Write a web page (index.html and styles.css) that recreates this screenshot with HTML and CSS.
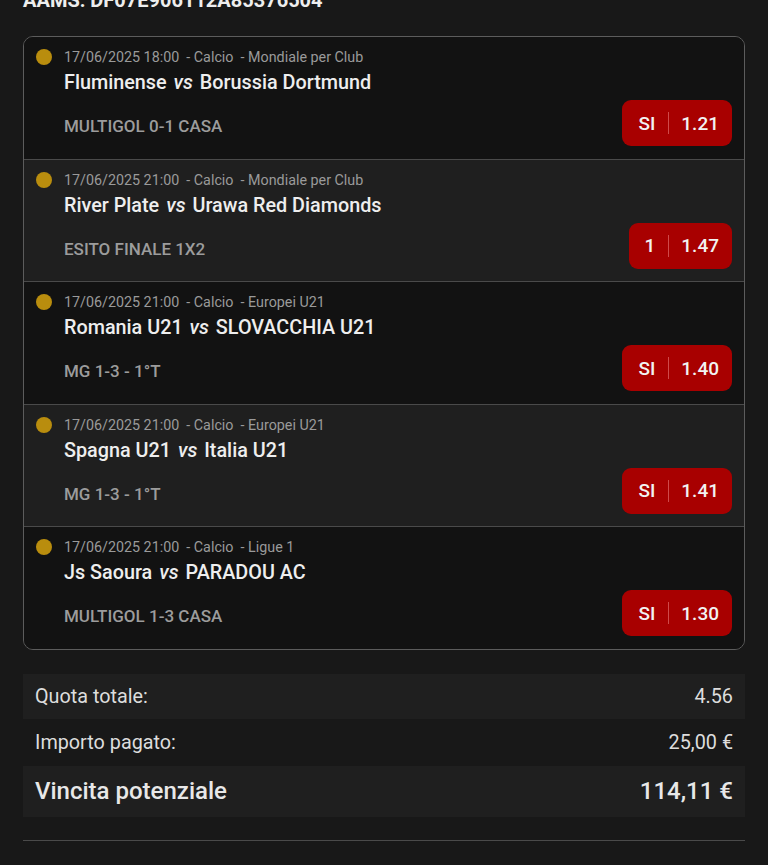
FILE: index.html
```html
<!DOCTYPE html>
<html lang="it">
<head>
    <meta charset="UTF-8">
    <meta name="viewport" content="width=device-width, initial-scale=1.0">
    <title>Scommessa</title>
    <link rel="stylesheet" href="styles.css">
</head>
<body>

    <div class="wrap">
        <div class="codice">AAMS: DF07E906112A85376504</div>

        <!-- Lista eventi -->
        <div class="eventi">
            <div class="evento">
                <span class="dot"></span>
                <div class="corpo">
                    <p class="meta">17/06/2025 18:00 &nbsp;- Calcio &nbsp;- Mondiale per Club</p>
                    <p class="partita">Fluminense <i>vs</i> Borussia Dortmund</p>
                    <div class="riga">
                        <span class="mercato">MULTIGOL 0-1 CASA</span>
                        <span class="quota"><b>SI</b><span class="sep"></span><b>1.21</b></span>
                    </div>
                </div>
            </div>
            <div class="evento">
                <span class="dot"></span>
                <div class="corpo">
                    <p class="meta">17/06/2025 21:00 &nbsp;- Calcio &nbsp;- Mondiale per Club</p>
                    <p class="partita">River Plate <i>vs</i> Urawa Red Diamonds</p>
                    <div class="riga">
                        <span class="mercato">ESITO FINALE 1X2</span>
                        <span class="quota"><b>1</b><span class="sep"></span><b>1.47</b></span>
                    </div>
                </div>
            </div>
            <div class="evento">
                <span class="dot"></span>
                <div class="corpo">
                    <p class="meta">17/06/2025 21:00 &nbsp;- Calcio &nbsp;- Europei U21</p>
                    <p class="partita">Romania U21 <i>vs</i> SLOVACCHIA U21</p>
                    <div class="riga">
                        <span class="mercato">MG 1-3 - 1°T</span>
                        <span class="quota"><b>SI</b><span class="sep"></span><b>1.40</b></span>
                    </div>
                </div>
            </div>
            <div class="evento">
                <span class="dot"></span>
                <div class="corpo">
                    <p class="meta">17/06/2025 21:00 &nbsp;- Calcio &nbsp;- Europei U21</p>
                    <p class="partita">Spagna U21 <i>vs</i> Italia U21</p>
                    <div class="riga">
                        <span class="mercato">MG 1-3 - 1°T</span>
                        <span class="quota"><b>SI</b><span class="sep"></span><b>1.41</b></span>
                    </div>
                </div>
            </div>
            <div class="evento">
                <span class="dot"></span>
                <div class="corpo">
                    <p class="meta">17/06/2025 21:00 &nbsp;- Calcio &nbsp;- Ligue 1</p>
                    <p class="partita">Js Saoura <i>vs</i> PARADOU AC</p>
                    <div class="riga">
                        <span class="mercato">MULTIGOL 1-3 CASA</span>
                        <span class="quota"><b>SI</b><span class="sep"></span><b>1.30</b></span>
                    </div>
                </div>
            </div>
        </div>

        <!-- Riepilogo -->
        <div class="riepilogo">
            <div class="voce scura">
                <span>Quota totale:</span>
                <span>4.56</span>
            </div>
            <div class="voce">
                <span>Importo pagato:</span>
                <span>25,00 €</span>
            </div>
            <div class="voce scura grande">
                <span>Vincita potenziale</span>
                <span>114,11 €</span>
            </div>
        </div>

        <hr class="linea">
    </div>

</body>
</html>
```

FILE: styles.css
```css
/* Pagina */
body {
    margin: 0;
    background: #181818;
    color: #e6e6e6;
    font-family: Roboto, "Liberation Sans", sans-serif;
}

.wrap {
    padding: 0 23px;
}

/* Codice biglietto (tagliato in alto) */
.codice {
    font-size: 20px;
    font-weight: 700;
    line-height: 24px;
    margin-top: -12px;
    color: #eee;
}

/* Lista eventi */
.eventi {
    margin-top: 24px;
    border: 1px solid #5c5c5c;
    border-radius: 10px;
    overflow: hidden;
}

.evento {
    display: flex;
    gap: 12px;
    padding: 11px 12px 12.5px 12px;
    background: #121212;
    border-top: 1px solid #4a4a4a;
}

.evento:first-child {
    border-top: none;
}

.evento:nth-child(even) {
    background: #1f1f1f;
}

.dot {
    flex: none;
    width: 16px;
    height: 16px;
    border-radius: 50%;
    background: #b98d0e;
    margin-top: 1px;
}

.corpo {
    flex: 1;
}

.meta {
    margin: 0;
    font-size: 14.3px;
    line-height: 18px;
    color: #9a9a9a;
}

.partita {
    margin: 5px 0 0;
    font-size: 19.8px;
    line-height: 24px;
    font-weight: 500;
    color: #eee;
}

.partita i {
    margin: 0 2px;
}

.riga {
    display: flex;
    justify-content: space-between;
    align-items: center;
    margin-top: 5px;
}

.mercato {
    font-size: 17px;
    font-weight: 500;
    line-height: 20px;
    color: #9c9c9c;
    margin-top: 6px;
}

/* Pulsante quota */
.quota {
    display: flex;
    align-items: center;
    height: 46px;
    padding: 0 13px 0 16px;
    background: #a80000;
    border-radius: 9px;
    font-size: 19px;
    color: #f2f2f2;
}

.quota b {
    font-weight: 500;
}

.sep {
    width: 1px;
    height: 22px;
    background: #d04a4a;
    margin: 0 12px 0 13px;
}

/* Riepilogo */
.riepilogo {
    margin-top: 24px;
}

.voce {
    display: flex;
    justify-content: space-between;
    align-items: center;
    height: 47px;
    padding: 0 12px;
    font-size: 19.8px;
    color: #ddd;
}

.voce.scura {
    background: #1f1f1f;
    height: 45px;
}

.voce.grande {
    height: 51px;
    font-size: 24px;
    font-weight: 500;
    color: #e8e8e8;
}

.linea {
    margin: 23px 0 0;
    border: none;
    border-top: 1px solid #4a4a4a;
}
```
